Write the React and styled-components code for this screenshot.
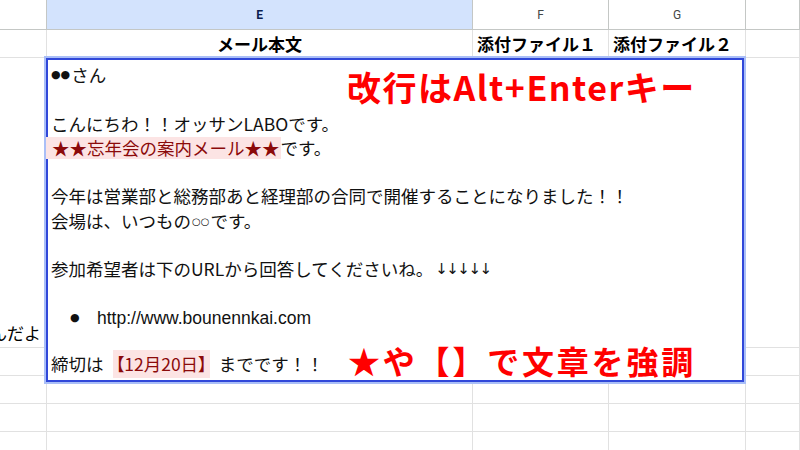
import React from "react";
import styled, { createGlobalStyle } from "styled-components";

const GlobalStyle = createGlobalStyle`
  html, body { margin: 0; padding: 0; background: #fff; }
  body { font-family: "Noto Sans CJK JP", "Liberation Sans", sans-serif; }
`;

const Page = styled.div`
  position: relative;
  width: 800px;
  height: 450px;
  overflow: hidden;
  background: #fff;
`;

const Grid = styled.div`
  display: grid;
  grid-template-columns: 47px 426px 136px 137px 1fr;
  grid-template-rows: 30px 28px 290px 28px 28px 28px 28px;
`;

const HeadCell = styled.div`
  box-sizing: border-box;
  display: flex;
  align-items: center;
  justify-content: center;
  border-right: 1px solid #c4c7c5;
  border-bottom: 1px solid #c4c7c5;
  background: ${(p) => (p.$active ? "#d3e3fd" : "#fff")};
  color: ${(p) => (p.$active ? "#0b1d4f" : "#444746")};
  font-family: Roboto, "Liberation Sans", sans-serif;
  font-size: 12px;
  font-weight: ${(p) => (p.$active ? 700 : 400)};
`;

const Cell = styled.div`
  box-sizing: border-box;
  display: flex;
  align-items: ${(p) => (p.$valign === "bottom" ? "flex-end" : "center")};
  justify-content: ${(p) =>
    p.$align === "center" ? "center" : p.$align === "right" ? "flex-end" : "flex-start"};
  padding: ${(p) => (p.$valign === "bottom" ? "0 5px 2px 4px" : "0 4px")};
  border-right: 1px solid #e1e1e1;
  border-bottom: 1px solid #e1e1e1;
  overflow: hidden;
  white-space: nowrap;
  color: #000;
  font-size: 17px;
  font-weight: ${(p) => (p.$bold ? 700 : 400)};
`;

const Editor = styled.div`
  position: absolute;
  left: 46px;
  top: 58px;
  width: 698px;
  height: 324px;
  box-sizing: border-box;
  border: 2px solid #3048d9;
  box-shadow: 0 0 0 2px #aabff7;
  background: #fff;
  padding: 3px 3px 0 3px;
  display: flex;
  flex-direction: column;
  color: #111;
  font-size: 17.5px;
`;

const Line = styled.div`
  height: ${(p) => p.$h || 24.3}px;
  line-height: ${(p) => p.$h || 24.3}px;
  white-space: nowrap;
  display: flex;
  align-items: center;
`;

const Dots = styled.span`
  font-family: "DejaVu Sans", sans-serif;
  font-size: 11px;
  margin-right: 1px;
`;

const SmallRing = styled.span`
  font-family: "DejaVu Sans", sans-serif;
  font-size: 10px;
  margin: 3px 1px 0;
`;

const Mark = styled.span`
  background: #fce4e4;
  color: #8b0a0a;
  padding: ${(p) => (p.$tall ? "2px 3px" : "0 1px 0 6px")};
  margin-left: ${(p) => p.$shift || 0}px;
  margin-right: ${(p) => p.$gap || 0}px;
  line-height: ${(p) => (p.$tall ? 24 : 22)}px;
  font-feature-settings: ${(p) => (p.$tall ? '"palt"' : "normal")};
`;

const Arrows = styled.span`
  font-family: "DejaVu Sans", "Liberation Sans", sans-serif;
  font-size: 15px;
  margin-left: 2px;
  letter-spacing: -1.5px;
`;

const Bullet = styled.span`
  font-family: "DejaVu Sans", sans-serif;
  font-size: 11px;
  margin-left: 19px;
  width: 27px;
`;

const Url = styled.span`
  font-family: "Liberation Sans", sans-serif;
  font-size: 17.5px;
`;

const Callout = styled.div`
  position: absolute;
  left: ${(p) => p.$x}px;
  top: ${(p) => p.$y}px;
  color: #ff0000;
  font-family: "Noto Sans CJK JP", sans-serif;
  font-weight: 700;
  font-size: ${(p) => p.$size || 32}px;
  line-height: 38px;
  letter-spacing: ${(p) => p.$ls || 0}px;
  white-space: nowrap;
`;

const columns = [
  { id: "D", label: "" },
  { id: "E", label: "E", active: true },
  { id: "F", label: "F" },
  { id: "G", label: "G" },
  { id: "H", label: "" },
];

const row1 = [
  {},
  { text: "メール本文", bold: true, align: "center" },
  { text: "添付ファイル１", bold: true },
  { text: "添付ファイル２", bold: true },
  {},
];

export default function App() {
  return (
    <Page>
      <GlobalStyle />
      <Grid>
        {columns.map((c) => (
          <HeadCell key={c.id} $active={c.active}>
            {c.label}
          </HeadCell>
        ))}
        {row1.map((c, i) => (
          <Cell key={"r1" + i} $bold={c.bold} $align={c.align}>
            {c.text}
          </Cell>
        ))}
        <Cell $align="right" $valign="bottom">なるんだよ</Cell>
        <Cell />
        <Cell />
        <Cell />
        <Cell />
        {Array.from({ length: 20 }).map((_, i) => (
          <Cell key={"e" + i} />
        ))}
      </Grid>

      <Editor>
        <Line>
          <Dots>●●</Dots>さん
        </Line>
        <Line />
        <Line>こんにちわ！！オッサンLABOです。</Line>
        <Line>
          <Mark $shift={-5}>★★忘年会の案内メール★★</Mark>です。
        </Line>
        <Line />
        <Line>今年は営業部と総務部あと経理部の合同で開催することになりました！！</Line>
        <Line>
          会場は、いつもの<SmallRing>○○</SmallRing>です。
        </Line>
        <Line />
        <Line>
          参加希望者は下のURLから回答してくださいね。<Arrows>↓↓↓↓↓</Arrows>
        </Line>
        <Line />
        <Line>
          <Bullet>●</Bullet>
          <Url>http://www.bounennkai.com</Url>
        </Line>
        <Line $h={20} />
        <Line $h={28}>
          締切は<Mark $tall $shift={9} $gap={9}>【12月20日】</Mark>までです！！
        </Line>
      </Editor>

      <Callout $x={347} $y={68} $size={34} $ls={1.5}>改行はAlt+Enterキー</Callout>
      <Callout $x={348} $y={341} $ls={2.8}>★や【】で文章を強調</Callout>
    </Page>
  );
}
